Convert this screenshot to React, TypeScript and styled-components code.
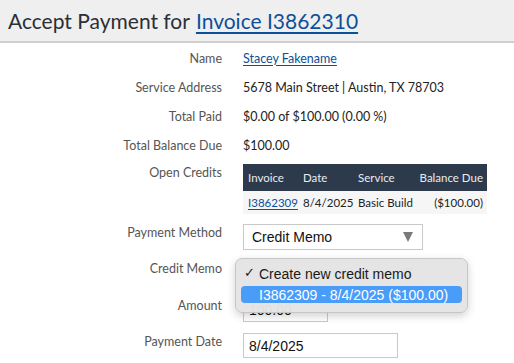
import React from 'react'
import styled, { createGlobalStyle } from 'styled-components'

const GlobalStyle = createGlobalStyle`
  body {
    margin: 0;
    background: #ffffff;
    font-family: Lato, "Noto Sans", sans-serif;
    color: #222;
  }
`

const Page = styled.div`
  width: 514px;
  height: 363px;
  overflow: hidden;
  background: #fff;
`

const Header = styled.div`
  height: 41px;
  background: #efefef;
  border-bottom: 2px solid #cfcfcf;
  display: flex;
  align-items: center;
  padding-left: 8px;
  font-size: 21px;
  color: #2b2f36;
`

const TitleLink = styled.a`
  color: #0d4f9a;
  text-decoration: underline;
  text-underline-offset: 3px;
  margin-left: 6px;
`

const Form = styled.div`
  display: grid;
  grid-template-columns: 222px 1fr;
  column-gap: 21px;
  padding-top: 1px;
`

const Label = styled.div<{ $top?: number }>`
  text-align: right;
  font-size: 12.5px;
  color: #555;
  line-height: 18px;
  padding-top: ${p => p.$top ?? 0}px;
`

const Value = styled.div`
  font-size: 12.5px;
  line-height: 18px;
  color: #222;
`

const TextRow = styled.div`
  display: contents;
  & > div {
    height: 29px;
    display: flex;
    align-items: center;
  }
  & > div:first-child {
    justify-content: flex-end;
  }
`

const Link = styled.a`
  color: #0d4f9a;
  text-decoration: underline;
  text-underline-offset: 2px;
`

const Table = styled.table`
  width: 244px;
  table-layout: fixed;
  border-collapse: collapse;
  font-size: 11.5px;
  margin-top: 4px;
`

const Th = styled.th<{ $right?: boolean; $w: number }>`
  box-sizing: border-box;
  width: ${p => p.$w}px;
  background: #2c3a4c;
  color: #e9ecef;
  font-weight: normal;
  text-align: ${p => (p.$right ? 'right' : 'left')};
  height: 27px;
  padding: 0 4px 0 5px;
  white-space: nowrap;
`

const Td = styled.td<{ $right?: boolean }>`
  background: #f6f6f6;
  text-align: ${p => (p.$right ? 'right' : 'left')};
  height: 23px;
  padding: 0 4px 0 5px;
  white-space: nowrap;
  color: #222;
`

const Field = styled.div<{ $mt: number }>`
  margin-top: ${p => p.$mt}px;
  position: relative;
`

const Select = styled.div<{ $w: number }>`
  width: ${p => p.$w}px;
  height: 26px;
  box-sizing: border-box;
  border: 1px solid #c9c9c9;
  background: #fff;
  display: flex;
  align-items: center;
  padding: 0 9px 0 8px;
  font-family: "Liberation Sans", Arial, sans-serif;
  font-size: 14px;
  color: #111;
`

const Caret = styled.span`
  margin-left: auto;
  width: 0;
  height: 0;
  border-left: 5px solid transparent;
  border-right: 5px solid transparent;
  border-top: 10px solid #7a7a7a;
`

const Input = styled.div<{ $w: number }>`
  width: ${p => p.$w}px;
  height: 25px;
  box-sizing: border-box;
  border: 1px solid #c9c9c9;
  background: #fff;
  display: flex;
  align-items: center;
  padding-left: 5px;
  font-family: "Liberation Sans", Arial, sans-serif;
  font-size: 14px;
  color: #111;
`

const Menu = styled.div`
  position: absolute;
  left: -8px;
  top: -2px;
  width: 233px;
  height: 55px;
  box-sizing: border-box;
  background: rgba(228, 228, 228, 0.97);
  border: 1px solid #c6c6c6;
  border-radius: 7px;
  box-shadow: 0 3px 8px rgba(0, 0, 0, 0.18);
  padding: 6px 5px;
  font-family: "Liberation Sans", Arial, sans-serif;
  font-size: 14px;
  z-index: 2;
`

const Option = styled.div<{ $active?: boolean }>`
  height: 17px;
  display: flex;
  align-items: center;
  border-radius: 4px;
  padding-left: 18px;
  position: relative;
  color: ${p => (p.$active ? '#fff' : '#1a1a1a')};
  background: ${p => (p.$active ? '#4a9cf9' : 'transparent')};
  margin-bottom: 4px;
`

const Check = styled.span`
  position: absolute;
  left: 3px;
  top: 0;
  font-size: 13px;
`

export default function App() {
  return (
    <Page>
      <GlobalStyle />
      <Header>
        Accept Payment for <TitleLink>Invoice I3862310</TitleLink>
      </Header>
      <Form>
        <TextRow>
          <Label>Name</Label>
          <Value><Link>Stacey Fakename</Link></Value>
        </TextRow>
        <TextRow>
          <Label>Service Address</Label>
          <Value>5678 Main Street | Austin, TX 78703</Value>
        </TextRow>
        <TextRow>
          <Label>Total Paid</Label>
          <Value>$0.00 of $100.00 (0.00 %)</Value>
        </TextRow>
        <TextRow>
          <Label>Total Balance Due</Label>
          <Value>$100.00</Value>
        </TextRow>

        <Label $top={4}>Open Credits</Label>
        <Value>
          <Table>
            <thead>
              <tr>
                <Th $w={55}>Invoice</Th>
                <Th $w={55}>Date</Th>
                <Th $w={61}>Service</Th>
                <Th $w={73} $right>Balance Due</Th>
              </tr>
            </thead>
            <tbody>
              <tr>
                <Td><Link>I3862309</Link></Td>
                <Td>8/4/2025</Td>
                <Td>Basic Build</Td>
                <Td $right>($100.00)</Td>
              </tr>
            </tbody>
          </Table>
        </Value>

        <Label $top={10}>Payment Method</Label>
        <Field $mt={10}>
          <Select $w={180}>
            Credit Memo
            <Caret />
          </Select>
        </Field>

        <Label $top={10}>Credit Memo</Label>
        <Field $mt={10}>
          <Select $w={180}>
            <Caret />
          </Select>
          <Menu>
            <Option>
              <Check>✓</Check>
              Create new credit memo
            </Option>
            <Option $active>I3862309 - 8/4/2025 ($100.00)</Option>
          </Menu>
        </Field>

        <Label $top={11}>Amount</Label>
        <Field $mt={11}>
          <Input $w={85}>100.00</Input>
        </Field>

        <Label $top={11}>Payment Date</Label>
        <Field $mt={11}>
          <Input $w={155}>8/4/2025</Input>
        </Field>
      </Form>
    </Page>
  )
}
